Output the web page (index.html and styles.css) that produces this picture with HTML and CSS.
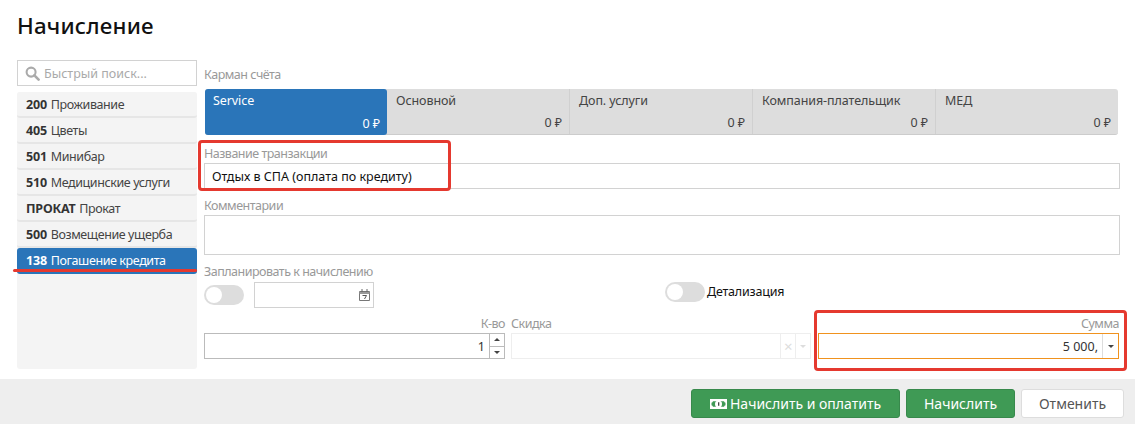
FILE: index.html
```html
<!DOCTYPE html>
<html lang="ru">
<head>
<meta charset="utf-8">
<title>Начисление</title>
<link rel="stylesheet" href="styles.css">
</head>
<body>
<div class="page">
  <h1 class="title">Начисление</h1>
  <div class="content">
    <aside class="sidebar">
      <div class="search">
        <svg class="search-icon" viewBox="0 0 16 16" width="15" height="15"><circle cx="6.500" cy="6.500" r="4.800" fill="none" stroke="#aaa" stroke-width="2.200"/><path d="M10 10l4.500 4.500" stroke="#aaa" stroke-width="2.800" stroke-linecap="round"/></svg>
        <span>Быстрый поиск...</span>
      </div>
      <ul class="list">
        <li class="item"><b>200</b> Проживание</li>
        <li class="item"><b>405</b> Цветы</li>
        <li class="item"><b>501</b> Минибар</li>
        <li class="item"><b>510</b> Медицинские услуги</li>
        <li class="item"><b>ПРОКАТ</b> Прокат</li>
        <li class="item"><b>500</b> Возмещение ущерба</li>
        <li class="item active"><b>138</b> Погашение кредита</li>
      </ul>
    </aside>
    <main class="main">
      <div class="label pocket-label">Карман счёта</div>
      <div class="tabs">
        <div class="tab selected"><span>Service</span><span class="amount">0 ₽</span></div>
        <div class="tab"><span>Основной</span><span class="amount">0 ₽</span></div>
        <div class="tab"><span>Доп. услуги</span><span class="amount">0 ₽</span></div>
        <div class="tab"><span>Компания-плательщик</span><span class="amount">0 ₽</span></div>
        <div class="tab"><span>МЕД</span><span class="amount">0 ₽</span></div>
      </div>
      <div class="label name-label">Название транзакции</div>
      <div class="input name-input">Отдых в СПА (оплата по кредиту)</div>
      <div class="label comment-label">Комментарии</div>
      <div class="input textarea"></div>
      <div class="label plan-label">Запланировать к начислению</div>
      <div class="plan-row">
        <span class="toggle plan-toggle"><i></i></span>
        <div class="input date-input">
          <svg viewBox="0 0 11 12" width="11" height="12"><path d="M.5 2.500h10v9H.5z" fill="none" stroke="#777"/><path d="M.5 3h10v2H.5z" fill="#999"/><path d="M3 0v3M8 0v3" stroke="#666"/><path d="M3.500 6.500h4l-2 3.500" fill="none" stroke="#555"/></svg>
        </div>
        <span class="toggle detail-toggle"><i></i></span>
        <span class="detail-text">Детализация</span>
      </div>
      <div class="amounts">
        <div class="field">
          <div class="label right">К-во</div>
          <div class="input qty">
            <span class="value">1</span>
            <span class="spin"><em><u class="up"></u></em><em><u class="down"></u></em></span>
          </div>
        </div>
        <div class="field">
          <div class="label">Скидка</div>
          <div class="input discount">
            <span class="grow"></span>
            <span class="side clear">×</span>
            <span class="side"><u class="down faint"></u></span>
          </div>
        </div>
        <div class="field">
          <div class="label right">Сумма</div>
          <div class="input sum">
            <span class="value sum-value">5 000,</span>
            <span class="side sum-side"><u class="down"></u></span>
          </div>
        </div>
      </div>
    </main>
  </div>
  <footer class="footer">
    <button class="btn green pay">
      <svg viewBox="0 0 17 12" width="17" height="12"><path fill-rule="evenodd" d="M0 1h17v10H0zM3 3.200a2 2 0 0 1-1.500 1.500v2.600A2 2 0 0 1 3 8.800h11a2 2 0 0 1 1.500-1.500V4.700A2 2 0 0 1 14 3.200z" fill="#fff"/><ellipse cx="8.500" cy="6" rx="3.500" ry="3.600" fill="#fff"/><path d="M8.700 4.200v3.600" stroke="#333" stroke-width="1.200"/></svg>
      Начислить и оплатить
    </button>
    <button class="btn green charge">Начислить</button>
    <button class="btn cancel">Отменить</button>
  </footer>
  <div class="mark mark-name"></div>
  <div class="mark mark-sum"></div>
  <div class="mark-line"></div>
</div>
</body>
</html>
```
FILE: styles.css
```css
* { box-sizing: border-box; }
html, body { margin: 0; padding: 0; }
body {
  background: #fff;
  font-family: "Noto Sans", "Open Sans", sans-serif;
  font-size: 12.500px;
  letter-spacing: -.4px;
  color: #333;
  overflow: hidden;
}
.page { position: relative; width: 1135px; height: 424px; display: flex; flex-direction: column; }
.title {
  margin: 0;
  padding: 10px 0 0 17px;
  height: 60px;
  font-size: 22.300px;
  line-height: 31px;
  font-weight: 500;
  color: #111;
  letter-spacing: .2px;
}
.content { display: flex; height: 319px; padding-left: 17px; }
.sidebar { width: 180px; display: flex; flex-direction: column; }
.search {
  height: 26px;
  border: 1px solid #d2d2d2;
  display: flex;
  align-items: center;
  gap: 4px;
  padding-left: 7px;
  color: #aaa;
  letter-spacing: 0;
}
.search-icon { flex: none; }
.list {
  list-style: none;
  margin: 6px 0 0;
  padding: 0;
  height: 277px;
  background: #f4f4f4;
  border-radius: 3px;
}
.item {
  height: 26px;
  line-height: 26px;
  padding-left: 9px;
  border-bottom: 2px solid #e6e6e6;
  background: #f4f4f4;
  border-radius: 3px;
  color: #444;
}
.item b { color: #333; font-weight: 700; margin-right: 1px; letter-spacing: -.2px; }
.item.active { background: #2a75b9; color: #fff; border-bottom-color: #2a75b9; }
.item.active b { color: #fff; }
.main { width: 916px; margin-left: 7px; padding-top: 7px; }
.label { color: #999; line-height: 16px; letter-spacing: -.5px; }
.right { text-align: right; }
.pocket-label { height: 22px; }
.tabs {
  display: flex;
  height: 46px;
  margin-left: 1px;
  width: 913px;
  background: #ddd;
  border-radius: 3px;
  border-bottom: 1px solid #ccc;
  letter-spacing: -.08px;
}
.tab {
  flex: 1;
  display: flex;
  flex-direction: column;
  justify-content: space-between;
  padding: 3px 7px 2px 9px;
  border-right: 1px solid #d0d0d0;
  color: #444;
  line-height: 18px;
}
.tab:last-child { border-right: 0; }
.tab.selected { flex: none; width: 182px; padding-left: 8px; background: #2a75b9; color: #fff; border-radius: 3px; border: 0; margin-bottom: -1px; }
.amount { text-align: right; }
.input { border: 1px solid #d2d2d2; background: #fff; display: flex; align-items: center; }
.name-label { margin-top: 11px; height: 17px; }
.name-input { height: 26px; padding-left: 7px; color: #111; letter-spacing: 0; }
.comment-label { margin-top: 9px; height: 17px; }
.textarea { height: 40px; }
.plan-label { margin-top: 9px; height: 18px; }
.plan-row { position: relative; display: flex; height: 34px; }
.toggle {
  display: block;
  width: 40px;
  height: 20px;
  border-radius: 10px;
  background: #ddd;
}
.toggle i {
  display: block;
  width: 16px;
  height: 16px;
  margin: 2px;
  border-radius: 50%;
  background: #fff;
}
.plan-toggle { margin-top: 3px; }
.date-input {
  width: 120px;
  height: 26px;
  margin-left: 10px;
  justify-content: flex-end;
  padding-right: 3px;
}
.detail-toggle { margin-left: 291px; }
.detail-text { margin-left: 2px; line-height: 20px; color: #111; letter-spacing: -.2px; }
.amounts { display: flex; gap: 6px; margin-top: 0; }
.field { width: 301px; }
.field:nth-child(1) { width: 301px; }
.field:nth-child(2) { width: 300px; }
.field:nth-child(3) { width: 301px; margin-left: 1px; }
.field .label { height: 17px; }
.field .input { height: 26px; }
.value { flex: 1; text-align: right; color: #333; letter-spacing: 0; padding-right: 4px; }
.sum-value { padding-right: 4px; }
.qty { border-color: #bbb; }
.spin { width: 15px; height: 100%; border-left: 1px solid #bbb; display: flex; flex-direction: column; }
.spin em { flex: 1; display: flex; align-items: center; justify-content: center; }
.spin em + em { border-top: 1px solid #bbb; }
.up { width: 0; height: 0; border: 3px solid transparent; border-top: 0; border-bottom-color: #444; }
.down { width: 0; height: 0; border: 3px solid transparent; border-bottom: 0; border-top-color: #444; }
.faint { border-top-color: #ddd; }
.discount { border-color: #eee; }
.grow { flex: 1; }
.side {
  width: 15px;
  height: 100%;
  border-left: 1px solid #eee;
  display: flex;
  align-items: center;
  justify-content: center;
}
.clear { color: #ddd; font-size: 15px; }
.sum { border-color: #f0921e; }
.sum-side { width: 16px; border-left-color: #ddd; }
.footer {
  height: 45px;
  background: #eee;
  display: flex;
  justify-content: flex-end;
  align-items: flex-start;
  gap: 6px;
  padding: 10px 11px 0 0;
  letter-spacing: 0;
}
.btn {
  height: 29px;
  border-radius: 3px;
  font-family: inherit;
  font-size: 14px;
  padding: 0;
  display: flex;
  align-items: center;
  justify-content: center;
}
.green { background: #3f9a55; border: 1px solid #38894c; color: #fff; }
.pay { width: 209px; gap: 3px; }
.charge { width: 109px; }
.cancel { width: 103px; background: #fff; border: 1px solid #ddd; color: #555; }
.mark { position: absolute; border: 3px solid #e5392f; border-radius: 4px; }
.mark-name { left: 198px; top: 140px; width: 253px; height: 51px; }
.mark-sum { left: 814px; top: 310px; width: 313px; height: 61px; }
.mark-line { position: absolute; left: 13px; top: 269px; width: 184px; height: 3px; background: #e5392f; border-radius: 2px; }
```
